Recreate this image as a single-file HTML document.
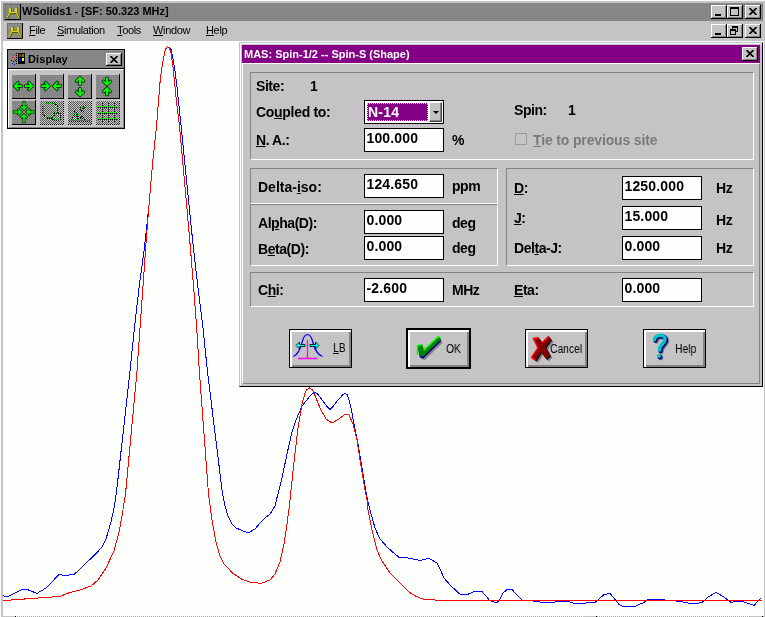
<!DOCTYPE html>
<html><head><meta charset="utf-8"><title>WSolids1</title>
<style>
html,body{margin:0;padding:0}
body{width:765px;height:617px;background:#c6c3c6;position:relative;overflow:hidden;font-family:"Liberation Sans",sans-serif;color:#000}
.a{position:absolute}
.mi,.lb,.ed,.bt,.tx{will-change:transform}
.dith{background:conic-gradient(#8f938f 25%,#848284 0) 0 0/2px 2px}
.tb{position:absolute;width:16px;height:14px;background:#c6c3c6;box-sizing:border-box;box-shadow:inset -1px -1px 0 #000,inset 1px 1px 0 #fff,inset -2px -2px 0 #848284}
.mi{position:absolute;top:22px;height:16px;font-size:11px;line-height:16px;letter-spacing:-0.35px;white-space:pre}
.grp{position:absolute;box-sizing:border-box;border:1px solid;border-color:#848284 #fff #fff #848284}
.ed{position:absolute;box-sizing:border-box;width:80px;height:24px;border:1px solid #000;background:#fcfffc;font-weight:bold;font-size:14px;letter-spacing:0.15px;line-height:16px;padding:1px 0 0 1.500px;white-space:pre}
.lb{position:absolute;font-weight:bold;font-size:14px;letter-spacing:-0.45px;line-height:16px;height:16px;white-space:pre}
u{text-decoration:underline;text-underline-offset:1px}
.btn{position:absolute;box-sizing:border-box;background:#c6c3c6;border:1px solid #000;box-shadow:inset 2px 2px 0 #fff,inset -2px -2px 0 #848284}
.bt{position:absolute;font-size:12px;line-height:14px;white-space:pre;transform-origin:0 0;transform:scaleX(.86)}
</style></head><body>
<!-- main frame -->
<div class="a" style="left:0;top:0;width:765px;height:1px;background:#fff"></div>
<div class="a" style="left:0;top:0;width:1px;height:617px;background:#fff"></div>
<div class="a dith" style="left:3px;top:3px;width:760px;height:18px"></div>
<div class="a tx" style="left:22px;top:3px;font-weight:bold;font-size:11px;line-height:16px;white-space:pre">WSolids1 - [SF: 50.323 MHz]</div>
<!-- app icons -->
<svg class="a" style="left:5px;top:4px" width="16" height="16" viewBox="0 0 16 16"><rect x="0" y="0" width="16" height="16" fill="none"/><path d="M0.500,16V0.500H16" fill="none" stroke="#737173" stroke-width="1"/><path d="M0,15.500H15.500V0" fill="none" stroke="#000" stroke-width="1"/><path d="M2,13.500 L3.300,11.500 L4.200,10 L4.600,4 L5.300,4 L5.600,8.500 L10.400,8.500 L10.700,4 L11.400,4 L11.800,10 L12.700,11.500 L14,13.500" fill="none" stroke="#5a5900" stroke-width="2.200" stroke-linejoin="round" transform="translate(0.400,0.400)"/><path d="M2,13.500 L3.300,11.500 L4.200,10 L4.600,4 L5.300,4 L5.600,8.500 L10.400,8.500 L10.700,4 L11.400,4 L11.800,10 L12.700,11.500 L14,13.500" fill="none" stroke="#dedb00" stroke-width="1.200" stroke-linejoin="round"/></svg>
<svg class="a" style="left:7px;top:23px" width="16" height="16" viewBox="0 0 16 16"><rect x="0" y="0" width="16" height="16" fill="#8c8e8c"/><path d="M0.500,16V0.500H16" fill="none" stroke="#737173" stroke-width="1"/><path d="M0,15.500H15.500V0" fill="none" stroke="#000" stroke-width="1"/><path d="M2,13.500 L3.300,11.500 L4.200,10 L4.600,4 L5.300,4 L5.600,8.500 L10.400,8.500 L10.700,4 L11.400,4 L11.800,10 L12.700,11.500 L14,13.500" fill="none" stroke="#5a5900" stroke-width="2.200" stroke-linejoin="round" transform="translate(0.400,0.400)"/><path d="M2,13.500 L3.300,11.500 L4.200,10 L4.600,4 L5.300,4 L5.600,8.500 L10.400,8.500 L10.700,4 L11.400,4 L11.800,10 L12.700,11.500 L14,13.500" fill="none" stroke="#dedb00" stroke-width="1.200" stroke-linejoin="round"/></svg>
<!-- menu -->
<div class="mi" style="left:29px"><u>F</u>ile</div>
<div class="mi" style="left:57px"><u>S</u>imulation</div>
<div class="mi" style="left:117px"><u>T</u>ools</div>
<div class="mi" style="left:153px"><u>W</u>indow</div>
<div class="mi" style="left:206px"><u>H</u>elp</div>
<!-- title buttons -->
<div class="tb" style="left:711px;top:5px"><div class="a" style="left:4px;top:9px;width:6px;height:2px;background:#000"></div></div>
<div class="tb" style="left:727px;top:5px"><div class="a" style="left:3px;top:2px;width:9px;height:9px;box-sizing:border-box;border:1px solid #000;border-top-width:2px"></div></div>
<div class="tb" style="left:745px;top:5px"><svg class="a" style="left:4px;top:3px" width="8" height="7" viewBox="0 0 8 7"><path d="M0.500,0 L7.500,7 M7.500,0 L0.500,7" stroke="#000" stroke-width="1.600"/></svg></div>
<div class="tb" style="left:711px;top:24px"><div class="a" style="left:4px;top:9px;width:6px;height:2px;background:#000"></div></div>
<div class="tb" style="left:727px;top:24px"><div class="a" style="left:5px;top:2px;width:6px;height:6px;box-sizing:border-box;border:1px solid #000;border-top-width:2px"></div><div class="a" style="left:3px;top:5px;width:6px;height:6px;box-sizing:border-box;border:1px solid #000;border-top-width:2px;background:#c6c3c6"></div></div>
<div class="tb" style="left:745px;top:24px"><svg class="a" style="left:4px;top:3px" width="8" height="7" viewBox="0 0 8 7"><path d="M0.500,0 L7.500,7 M7.500,0 L0.500,7" stroke="#000" stroke-width="1.600"/></svg></div>
<!-- client area -->
<div class="a" style="left:3px;top:41px;width:761px;height:575px;background:#fcfffc"></div>
<div class="a" style="left:15px;top:616px;width:749px;height:1px;background:repeating-linear-gradient(90deg,#a5a6a5 0 1px,#fcfffc 1px 2px)"></div>
<div class="a" style="left:3px;top:616px;width:12px;height:1px;background:#c6c3c6"></div><div class="a" style="left:15px;top:616px;width:1px;height:1px;background:#000"></div>
<div class="a" style="left:583px;top:616px;width:13px;height:1px;background:#c6c3c6"></div><div class="a" style="left:596px;top:616px;width:1px;height:1px;background:#000"></div>
<div class="a" style="left:750px;top:616px;width:12px;height:1px;background:#c6c3c6"></div><div class="a" style="left:762px;top:616px;width:1px;height:1px;background:#000"></div>
<svg class="a" style="left:0;top:0" width="765" height="617" viewBox="0 0 765 617" shape-rendering="crispEdges">
<polyline fill="none" stroke="#0000ff" stroke-width="1" points="3.0,595.6 7.0,597.0 22.0,589.4 27.0,589.4 37.0,593.4 46.0,588.0 59.0,574.6 64.0,575.4 74.0,574.6 96.0,553.6 102.0,547.0 106.0,539.0 111.0,522.0 114.0,508.0 116.4,493.0 130.0,371.0 134.0,332.0 139.0,288.0 144.4,248.0 149.0,205.0 152.4,165.0 156.6,125.0 158.5,101.4 160.2,80.3 162.2,65.2 165.2,50.0 167.2,46.5 169.0,47.5 171.3,50.0 173.3,60.0 175.3,73.0 176.8,85.0 178.5,101.4 181.0,125.0 185.0,165.0 189.0,205.0 193.4,248.0 198.0,288.0 203.0,328.0 207.4,371.0 222.4,493.0 225.0,506.0 228.0,516.0 232.0,524.0 236.0,528.0 248.0,533.0 255.0,529.0 260.0,523.0 265.0,518.0 270.0,514.0 275.0,506.0 276.4,500.0 282.0,478.0 287.0,454.0 292.0,432.0 296.0,420.0 302.0,406.0 310.0,396.0 313.0,393.4 315.6,392.4 318.4,395.0 322.0,400.0 328.0,407.6 330.0,409.4 332.4,407.4 338.0,400.0 343.0,394.6 345.0,393.4 347.0,394.6 348.5,398.0 351.0,408.0 354.0,424.0 358.0,444.0 362.0,468.0 366.0,492.0 367.6,500.0 370.0,510.0 375.0,528.0 380.0,539.0 388.0,548.0 399.0,557.4 408.0,558.0 420.0,560.4 429.0,558.4 437.0,563.0 440.0,569.0 444.0,578.0 450.0,585.0 460.0,594.2 468.0,594.2 474.0,591.6 482.0,591.6 488.0,598.4 489.0,600.0 496.0,603.0 499.0,601.0 503.0,593.0 507.0,589.6 512.0,589.6 517.0,595.0 522.0,600.0 538.0,601.4 542.0,602.4 554.0,602.4 557.0,601.0 568.0,601.4 574.0,603.4 585.0,603.4 587.0,602.4 595.0,602.4 600.0,598.0 604.0,594.6 610.0,593.4 614.0,598.0 619.0,604.6 623.0,606.4 635.0,606.4 644.0,602.4 649.0,599.0 659.0,599.4 680.0,601.4 693.0,604.0 702.0,602.6 708.0,597.0 716.0,592.4 724.0,597.0 731.0,602.4 737.0,601.0 742.0,601.4 754.0,605.4 761.0,598.0"/>
<polyline fill="none" stroke="#ff0000" stroke-width="1" points="3.0,600.6 30.0,598.6 60.0,596.4 70.0,592.4 80.0,590.0 91.0,586.0 98.0,580.0 106.0,568.0 114.0,551.0 119.0,532.0 122.0,516.0 125.6,493.0 137.0,371.0 140.0,328.0 143.6,278.0 145.6,248.0 149.0,205.0 152.4,165.0 156.6,125.0 158.5,101.4 160.2,80.3 162.2,65.2 165.2,50.0 167.2,46.5 168.8,47.5 170.8,52.0 172.8,65.0 174.3,80.0 176.5,101.4 179.4,125.0 183.0,165.0 187.0,209.0 190.4,248.0 194.0,292.0 197.4,338.0 199.3,371.0 208.5,494.0 212.0,520.0 216.0,542.0 220.0,556.0 224.0,564.0 233.0,573.4 242.0,579.4 250.0,582.0 261.0,583.4 270.0,580.0 275.0,574.0 280.0,562.0 284.0,544.0 287.0,524.0 289.4,506.0 290.0,500.0 294.0,462.0 298.0,428.0 302.0,404.0 305.0,393.0 307.0,389.6 309.4,388.0 312.0,389.6 314.0,393.0 320.0,408.0 326.0,419.0 332.0,423.0 339.0,419.0 345.0,414.4 349.0,415.0 353.0,424.0 357.0,440.0 361.0,466.0 365.0,490.0 367.0,500.0 368.0,510.0 372.0,530.0 377.0,550.0 382.0,561.0 390.0,573.0 400.0,583.0 409.0,592.0 416.0,596.4 424.0,599.4 438.0,600.2 762.0,600.2"/>
</svg>
<!--TOOLBAR_START-->
<div class="a" id="tbar" style="left:7px;top:49px;width:118px;height:80px;background:#c6c3c6;box-sizing:border-box;border:1px solid #000">
<!-- inner coords relative to (8,50) -->
<div class="a dith" style="left:0;top:0;width:116px;height:18px"></div>
<div class="a" style="left:0;top:18px;width:116px;height:1px;background:#000"></div>
<div class="a" style="left:0;top:19px;width:116px;height:59px;box-sizing:border-box;border:1px solid;border-color:#fff #848284 #848284 #fff"></div>
<svg class="a" style="left:2px;top:2px" width="16" height="15" viewBox="0 0 16 15"><rect x="8" y="1" width="7" height="11" fill="#000"/><rect x="9" y="2" width="2" height="3" fill="#ff0000"/><rect x="12" y="2" width="2" height="3" fill="#00c300"/><rect x="9" y="6" width="2" height="3" fill="#0000ff"/><rect x="12" y="6" width="2" height="3" fill="#ffff00"/><g fill="#ff0000"><rect x="1" y="2" width="1" height="1"/><rect x="3" y="3" width="1" height="1"/><rect x="5" y="2" width="1" height="1"/><rect x="2" y="5" width="1" height="1"/><rect x="4" y="6" width="1" height="1"/></g><g fill="#0000ff"><rect x="1" y="8" width="1" height="1"/><rect x="3" y="9" width="1" height="1"/><rect x="5" y="8" width="1" height="1"/><rect x="2" y="11" width="1" height="1"/><rect x="4" y="12" width="1" height="1"/></g><g fill="#000"><rect x="6" y="1" width="1" height="1"/><rect x="6" y="3" width="1" height="1"/><rect x="6" y="5" width="1" height="1"/><rect x="6" y="7" width="1" height="1"/><rect x="6" y="9" width="1" height="1"/><rect x="6" y="11" width="1" height="1"/></g></svg>
<div class="a tx" style="left:20px;top:1px;font-weight:bold;font-size:11px;line-height:16px;white-space:pre;letter-spacing:0.1px">Display</div>
<div class="tb" style="left:98px;top:3px;height:13px"><svg class="a" style="left:4px;top:3px" width="8" height="7" viewBox="0 0 8 7"><path d="M0.500,0 L7.500,7 M7.500,0 L0.500,7" stroke="#000" stroke-width="1.600"/></svg></div>
<!-- buttons -->
<svg class="a" style="left:0;top:19px" width="116" height="59" viewBox="8 69 116 59">
<defs>
<pattern id="pd" width="2" height="2" patternUnits="userSpaceOnUse"><rect width="2" height="2" fill="#848284"/><rect width="1" height="1" fill="#8f938f"/></pattern>
<pattern id="pc" width="2" height="2" patternUnits="userSpaceOnUse"><rect width="2" height="2" fill="#c6c3c6"/><rect width="1" height="1" fill="#5a595a"/><rect x="1" y="1" width="1" height="1" fill="#5a595a"/></pattern>
<g id="ah"><path d="M0.500,0 L5,-4.500 L6.200,-3.300 L3.900,-1 L9,-1 L9,1 L3.900,1 L6.200,3.300 L5,4.500 Z" fill="#00ff00" stroke="#002800" stroke-width="1.700" paint-order="stroke" stroke-linejoin="round"/></g>
<g id="ahs"><path d="M0.500,0 L3.800,-3.300 L4.800,-2.300 L3.300,-0.800 L9,-0.800 L9,0.800 L3.300,0.800 L4.800,2.300 L3.800,3.300 Z" fill="#00ff00" stroke="#002800" stroke-width="1.500" paint-order="stroke" stroke-linejoin="round"/></g>
</defs>
<g shape-rendering="crispEdges">
<rect x="12" y="75" width="23" height="23" fill="url(#pd)"/><path d="M35.500,74V98.500H12" fill="none" stroke="#000"/>
<rect x="40" y="75" width="23" height="23" fill="url(#pd)"/><path d="M63.500,74V98.500H40" fill="none" stroke="#000"/>
<rect x="68" y="75" width="23" height="23" fill="url(#pd)"/><path d="M91.500,74V98.500H68" fill="none" stroke="#000"/>
<rect x="96" y="75" width="23" height="23" fill="url(#pd)"/><path d="M119.500,74V98.500H96" fill="none" stroke="#000"/>
<rect x="12" y="101" width="23" height="23" fill="url(#pd)"/><path d="M35.500,100V124.500H12" fill="none" stroke="#000"/>
<rect x="40" y="101" width="24" height="24" fill="url(#pc)"/><path d="M63.500,101V124.500H40" fill="none" stroke="#000" stroke-dasharray="1 1"/>
<rect x="68" y="101" width="24" height="24" fill="url(#pc)"/><path d="M91.500,101V124.500H68" fill="none" stroke="#000" stroke-dasharray="1 1"/>
<rect x="96" y="101" width="24" height="24" fill="url(#pc)"/><path d="M119.500,101V124.500H96" fill="none" stroke="#000" stroke-dasharray="1 1"/>
</g>
<!-- 1: <-> -->
<use href="#ah" transform="translate(13,86)"/><use href="#ah" transform="translate(34,86) scale(-1,1)"/>
<!-- 2: -><- -->
<use href="#ah" transform="translate(50.500,86) scale(-1,1)"/><use href="#ah" transform="translate(52,86)"/>
<!-- 3: up/down -->
<use href="#ah" transform="translate(80,76) rotate(90)"/><use href="#ah" transform="translate(80,97) rotate(-90)"/>
<!-- 4: down/up meeting -->
<use href="#ah" transform="translate(107,86.500) rotate(-90)"/><use href="#ah" transform="translate(107,86.500) rotate(90)"/>
<!-- 5: four inward -->
<use href="#ahs" transform="translate(22.500,112) scale(-1,1)"/><use href="#ahs" transform="translate(25.500,112)"/><use href="#ahs" transform="translate(24,110.500) rotate(-90)"/><use href="#ahs" transform="translate(24,113.500) rotate(90)"/>
<!-- 6: dotted rect -->
<g fill="none" stroke="#000" stroke-width="2" stroke-dasharray="1 1" shape-rendering="crispEdges"><path d="M46,103H54L57,106V113M43,106V114L46,118H52"/><path d="M54,113 L60,113 L60,120 L53,120Z"/></g>
<g fill="none" stroke="#00db00" stroke-width="1.200" stroke-dasharray="1 1" shape-rendering="crispEdges"><path d="M46,103.500H54L56.500,106V113M43.500,106V114L46,117.500H52"/><path d="M54.500,113.500 L59.500,113.500 L59.500,119.500 L53.500,119.500Z"/></g>
<!-- 7 -->
<g fill="none" stroke="#000" stroke-width="2" stroke-dasharray="1 1" shape-rendering="crispEdges"><path d="M69,121H91M72,120 L75.500,111.500 L79,120 M79,120 L82,116.500 L85,120 M81,110 L86,105.500 M81,106.500V110.500H85"/></g>
<g fill="none" stroke="#00db00" stroke-width="1.200" stroke-dasharray="1 1" shape-rendering="crispEdges"><path d="M69,120.500H90M72.500,120 L75.500,112 L78.500,120 M79.500,120 L82,117 L84.500,120 M81,109.500 L85.500,105.500 M81.500,107V110H84.500"/></g>
<!-- 8 -->
<g fill="none" stroke="#000" stroke-width="2" stroke-dasharray="1 1" shape-rendering="crispEdges"><path d="M98,107H118M98,113H118M98,119H118M102,103V122M108,103V122M114,103V122"/></g>
<g fill="none" stroke="#00db00" stroke-width="1.200" stroke-dasharray="1 1" shape-rendering="crispEdges"><path d="M98,106.500H118M98,112.500H118M98,118.500H118M101.500,103V122M107.500,103V122M113.500,103V122"/></g>
</svg>
</div>
<!--TOOLBAR_END-->
<!--DIALOG_START-->
<div class="a" id="dlg" style="left:239px;top:42px;width:524px;height:345px;background:#c6c3c6;box-sizing:border-box;border:1px solid;border-color:#c6c3c6 #000 #000 #c6c3c6">
<!-- coordinates inside are relative to (240,43) -->
<div class="a" style="left:0;top:0;width:522px;height:343px;box-sizing:border-box;border:1px solid;border-color:#fff #c6c3c6 #c6c3c6 #fff"></div>
<div class="a" style="left:2px;top:20px;width:518px;height:321px;box-sizing:border-box;border:1px solid;border-color:#fff #848284 #848284 #fff"></div>
<div class="a" style="left:2px;top:2px;width:518px;height:18px;background:#840084"></div>
<div class="a tx" style="left:4px;top:3px;color:#fff;font-weight:bold;font-size:11px;line-height:16px;white-space:pre">MAS: Spin-1/2 -- Spin-S (Shape)</div>
<div class="tb" style="left:502px;top:4px"><svg class="a" style="left:4px;top:3px" width="8" height="7" viewBox="0 0 8 7"><path d="M0.500,0 L7.500,7 M7.500,0 L0.500,7" stroke="#000" stroke-width="1.600"/></svg></div>
<!-- groups -->
<div class="grp" style="left:10px;top:29px;width:504px;height:88px"></div>
<div class="grp" style="left:10px;top:125px;width:248px;height:36px"></div>
<div class="grp" style="left:10px;top:161px;width:248px;height:62px"></div>
<div class="grp" style="left:266px;top:125px;width:248px;height:98px"></div>
<div class="grp" style="left:10px;top:229px;width:504px;height:35px"></div>
<!-- labels: top = baseline-13 -->
<div class="lb" style="left:16px;top:35px">Site:</div>
<div class="lb" style="left:70px;top:35px">1</div>
<div class="lb" style="left:16px;top:61px;letter-spacing:-0.3px">Co<u>u</u>pled to:</div>
<div class="lb" style="left:16px;top:89px"><u>N</u>. A.:</div>
<div class="lb" style="left:18px;top:136px;letter-spacing:0px">Delta-<u>i</u>so:</div>
<div class="lb" style="left:18px;top:172px">Al<u>p</u>ha(D):</div>
<div class="lb" style="left:18px;top:198px">B<u>e</u>ta(D):</div>
<div class="lb" style="left:18px;top:239px">C<u>h</u>i:</div>
<div class="lb" style="left:212px;top:89px">%</div>
<div class="lb" style="left:212px;top:135px">ppm</div>
<div class="lb" style="left:212px;top:172px">deg</div>
<div class="lb" style="left:212px;top:197px">deg</div>
<div class="lb" style="left:212px;top:239px">MHz</div>
<div class="lb" style="left:274px;top:59px">Spin:</div>
<div class="lb" style="left:328px;top:59px">1</div>
<div class="lb" style="left:274px;top:137px"><u>D</u>:</div>
<div class="lb" style="left:274px;top:167px"><u>J</u>:</div>
<div class="lb" style="left:274px;top:197px">Del<u>t</u>a-J:</div>
<div class="lb" style="left:274px;top:239px"><u>E</u>ta:</div>
<div class="lb" style="left:476px;top:137px">Hz</div>
<div class="lb" style="left:476px;top:169px">Hz</div>
<div class="lb" style="left:476px;top:197px">Hz</div>
<!-- checkbox -->
<div class="a" style="left:275px;top:90px;width:12px;height:12px;box-sizing:border-box;border:1px solid #9c9a9c;background:#c6c3c6"></div>
<div class="lb" style="left:293px;top:89px;color:#7b797b;letter-spacing:-0.15px"><u>T</u>ie to previous site</div>
<!-- combo -->
<div class="ed" style="left:124px;top:57px"></div>
<div class="a" style="left:127px;top:60px;width:61px;height:18px;background:#840084;box-sizing:border-box;border:1px dotted #7bff7b"></div>
<div class="lb" style="left:128px;top:61px;color:#fff;letter-spacing:0.2px">N-14</div>
<div class="a" style="left:189px;top:59px;width:13px;height:20px;box-sizing:border-box;background:#c6c3c6;border:1px solid;border-color:#fff #424142 #424142 #fff;box-shadow:inset -1px -1px 0 #848284"><div class="a" style="left:2.500px;top:7.500px;width:0;height:0;border:3px solid transparent;border-top:3px solid #000;border-bottom:0"></div></div>
<!-- edits -->
<div class="ed" style="left:124px;top:85px">100.000</div>
<div class="ed" style="left:124px;top:131px">124.650</div>
<div class="ed" style="left:124px;top:167px">0.000</div>
<div class="ed" style="left:124px;top:193px">0.000</div>
<div class="ed" style="left:124px;top:235px">-2.600</div>
<div class="ed" style="left:382px;top:133px">1250.000</div>
<div class="ed" style="left:382px;top:163px">15.000</div>
<div class="ed" style="left:382px;top:193px">0.000</div>
<div class="ed" style="left:382px;top:235px">0.000</div>
<!-- buttons -->
<div class="btn" style="left:49px;top:286px;width:63px;height:39px">
<svg class="a" style="left:3px;top:3px" width="32" height="28" viewBox="0 0 32 28"><path d="M0.500,23.500 C6,21 8,14 9.500,8 C11,2.500 13,1.500 14.500,1.500 C16,1.500 18,2.500 19.500,8 C21,14 23,21 29.500,23.500" fill="none" stroke="#0000ff" stroke-width="1.200"/><path d="M14.500,7V25M5,25.500H24" stroke="#ff00ff" stroke-width="1.300" fill="none"/><path d="M3,12.500 L6.500,9 V11.500 H12 V13.500 H6.500 V16 Z" fill="#00ffff" stroke="#000" stroke-width="0.800"/><path d="M26,12.500 L22.500,9 V11.500 H17 V13.500 H22.500 V16 Z" fill="#00ffff" stroke="#000" stroke-width="0.800"/></svg>
<div class="bt" style="left:43px;top:11px"><u>L</u>B</div></div>
<div class="btn" style="left:166px;top:285px;width:65px;height:41px;border-width:2px">
<svg class="a" style="left:7.500px;top:6px" width="30" height="30" viewBox="0 0 30 30"><path d="M1.500,9.500 L6.500,8.500 L7.500,14.500 L22.500,0.500 L24.500,2 L24.500,3.800 L7,20.800 L3.500,19.800 Z" fill="#848284" transform="translate(1.800,3.200)"/><path d="M1.500,9.500 L6.500,8.500 L7.500,14.500 L22.500,0.500 L24.500,2 L24.500,3.800 L7,20.800 L3.500,19.800 Z" fill="#000084" transform="translate(0.300,1.600)"/><path d="M1.500,9.500 L6.500,8.500 L7.500,14.500 L22.500,0.500 L24.500,2 L24.500,3.800 L7,20.800 L3.500,19.800 Z" fill="#008200"/><path d="M1.500,19 L1.500,9.500 L6.500,8.500 M7.500,14.500 L22.500,0.500 L24.500,2" fill="none" stroke="#00ff00" stroke-width="1.500"/></svg>
<div class="bt" style="left:38px;top:12px">OK</div></div>
<div class="btn" style="left:285px;top:286px;width:63px;height:39px">
<svg class="a" style="left:4.500px;top:6px" width="26" height="30" viewBox="0 0 26 30"><path d="M5,5 L10,4 L13.500,9.500 L20,2.500 L22.500,6 L17,13.500 L21.500,22 L17.500,25.500 L12.500,18.500 L7,27 L3,24 L9.500,14.500 Z" fill="#848284"/><path d="M3.500,3.500 L8.500,2.500 L12,8 L18.500,1 L21,4.500 L15.500,12 L20,20.500 L16,24 L11,17 L5.500,25.500 L1.500,22.500 L8,13 Z" fill="#000"/><path d="M2.500,2.500 L7.500,1.500 L11,7 L17.500,0 L20,3.500 L14.500,11 L19,19.500 L15,23 L10,16 L4.500,24.500 L0.500,21.500 L7,12 Z" fill="#840000"/><path d="M4.500,24 L0.500,21.500 L7,12 L2.500,2.500 L7.500,1.500 M11,7 L17.500,0.500" fill="none" stroke="#ff0000" stroke-width="1.500"/></svg>
<div class="bt" style="left:24px;top:12px">Cancel</div></div>
<div class="btn" style="left:403px;top:286px;width:63px;height:39px">
<svg class="a" style="left:8px;top:3px" width="22" height="30" viewBox="0 0 22 30"><g fill="none" stroke-linecap="round"><path d="M4.500,8.500 C5,3 15.500,2.500 15,8.500 C15,12 9.500,13.500 9.500,19" stroke="#848284" stroke-width="4.500"/><circle cx="9" cy="25" r="2.400" fill="#848284" stroke="none"/><path d="M3.500,7.500 C4,2 14.500,1.500 14,7.500 C14,11 8.500,12.500 8.500,18" stroke="#000084" stroke-width="4.500"/><circle cx="8" cy="24" r="2.500" fill="#000084" stroke="none"/><path d="M2.500,6.500 C3,1 13.500,0.500 13,6.500 C13,10 7.500,11.500 7.500,17" stroke="#00c3c6" stroke-width="3.500"/><circle cx="7" cy="23" r="2.100" fill="#00c3c6" stroke="none"/></g></svg>
<div class="bt" style="left:30.500px;top:12px">Help</div></div>
</div>
<!--DIALOG_END-->
</body></html>
